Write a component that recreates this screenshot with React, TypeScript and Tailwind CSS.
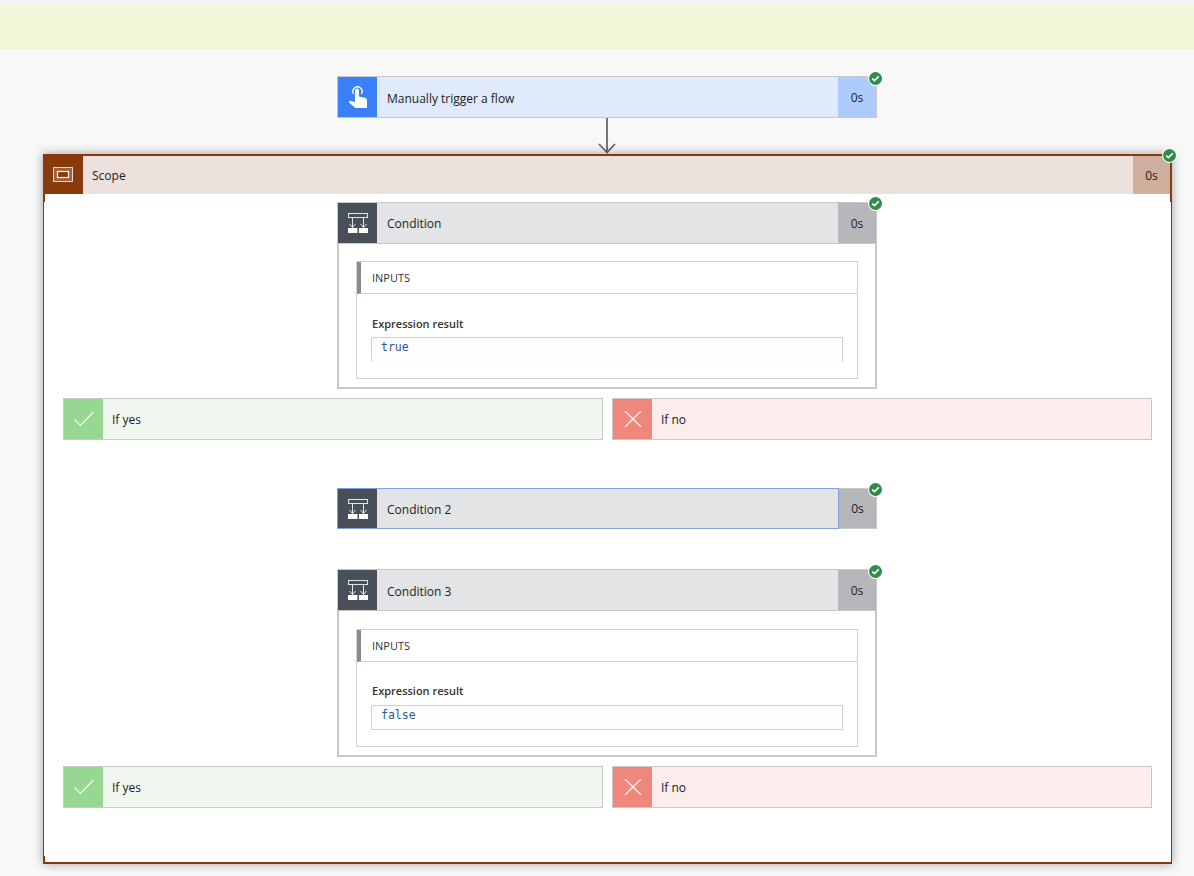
import React from 'react';

const CheckBadge: React.FC<{ pos?: string }> = ({ pos = '-top-[6px] -right-[7px]' }) => (
  <div className={`absolute ${pos} h-[15px] w-[15px] rounded-full bg-white flex items-center justify-center z-10`}>
    <div className="h-[13px] w-[13px] rounded-full bg-[#2f8c49] flex items-center justify-center">
      <svg width="9" height="9" viewBox="0 0 9 9" fill="none">
        <path d="M1.2 4.6 L3.4 6.6 L7.8 2.4" stroke="white" strokeWidth="1.6" />
      </svg>
    </div>
  </div>
);

const HandIcon: React.FC = () => (
  <svg width="22" height="26" viewBox="0 0 22 26" fill="none">
    <path d="M6.6 10 A4.6 4.6 0 1 1 14.4 10" stroke="white" strokeWidth="1.3" />
    <path
      d="M8 6.5 a2 2 0 0 1 4 0 V12.5 l6 1.3 q2 .5 2 2.5 V24 H8.5 L2.2 18.8 q-1 -1.6 1 -2 L8 18 Z"
      fill="white"
    />
  </svg>
);

const ConditionIcon: React.FC = () => (
  <svg width="20" height="20" viewBox="0 0 20 20" fill="none">
    <rect x="0.5" y="0.5" width="19" height="4" stroke="white" strokeOpacity="0.85" />
    <path d="M4.5 5 V14 M15.5 5 V14" stroke="white" strokeOpacity="0.85" />
    <path d="M1.5 11 L4.5 14.5 L7.5 11 M12.5 11 L15.5 14.5 L18.5 11" stroke="white" strokeOpacity="0.85" />
    <rect x="0" y="15" width="9.5" height="5" fill="white" />
    <rect x="11" y="15" width="9" height="5" fill="white" />
  </svg>
);

const ScopeIcon: React.FC = () => (
  <svg width="20" height="15" viewBox="0 0 20 15" fill="none">
    <rect x="0.5" y="0.5" width="19" height="14" stroke="#ead9cd" fill="rgba(255,255,255,0.2)" />
    <rect x="4.5" y="4.5" width="11" height="6" stroke="white" strokeWidth="1.2" fill="#883a0c" />
  </svg>
);

type HeaderProps = {
  title: string;
  icon: React.ReactNode;
  iconClass: string;
  barClass: string;
  timeClass: string;
  titlePad?: string;
  badgePos?: string;
};

const CardHeader: React.FC<HeaderProps> = ({
  title,
  icon,
  iconClass,
  barClass,
  timeClass,
  titlePad = 'pt-[2px]',
  badgePos,
}) => (
  <div className="relative flex h-full text-[12px] text-[#222]">
    <div className={`flex flex-1 min-w-0 ${barClass}`}>
      <div className={`flex w-[39px] shrink-0 items-center justify-center ${iconClass}`}>{icon}</div>
      <span className={`flex items-center pl-[10px] ${titlePad}`}>{title}</span>
    </div>
    <div className={`flex w-[38px] shrink-0 items-center justify-center pt-[1px] ${timeClass}`}>0s</div>
    <CheckBadge pos={badgePos} />
  </div>
);

type InputsProps = {
  value: string;
  openBottom?: boolean;
  top: string;
  labelPad: string;
  valueGap: string;
};

const Inputs: React.FC<InputsProps> = ({ value, openBottom, top, labelPad, valueGap }) => (
  <div className={`mx-[17px] ${top} border border-[#d0d0d0] text-[#333]`}>
    <div className="flex h-[32px] items-center border-b border-[#d0d0d0] border-l-[4px] border-l-[#868b90] pl-[11px] pt-[1px] text-[11px]">
      INPUTS
    </div>
    <div className={`pl-[14px] pr-[14px] ${labelPad} pb-[16px]`}>
      <div className="text-[11px] font-semibold leading-[15px] pl-px">Expression result</div>
      <div
        className={`${valueGap} h-[25px] border-x border-t border-[#d0d0d0] bg-[#fdfdfd] pl-[9px] pt-[2px] font-['DejaVu_Sans_Mono',monospace] text-[11.5px] leading-[14px] text-[#2b579a] ${
          openBottom ? '' : 'border-b'
        }`}
      >
        {value}
      </div>
    </div>
  </div>
);

type ConditionCardProps = InputsProps & {
  title: string;
  titlePad?: string;
  badgePos?: string;
};

const ConditionCard: React.FC<ConditionCardProps> = ({ title, titlePad, badgePos, ...inputs }) => (
  <div className="ml-[293px] w-[540px] border-2 border-t border-[#c8c8c8] bg-white">
    <div className="h-[41px] border-b border-[#c8c8c8] -mx-[1px]">
      <CardHeader
        title={title}
        icon={<ConditionIcon />}
        iconClass="bg-[#474f59]"
        barClass="bg-[#e3e4e5]"
        timeClass="bg-[#b5b7ba]"
        titlePad={titlePad}
        badgePos={badgePos}
      />
    </div>
    <Inputs {...inputs} />
    <div className="h-[8px]" />
  </div>
);

const Branch: React.FC<{ label: string; yes?: boolean }> = ({ label, yes }) => (
  <div className={`flex h-[42px] w-[540px] border border-[#c8c8c8] text-[12px] text-[#222] ${yes ? 'bg-[#eff7ef]' : 'bg-[#fdecec]'}`}>
    <div className={`flex w-[39px] items-center justify-center ${yes ? 'bg-[#97d78f]' : 'bg-[#f0877f]'}`}>
      <svg width="20" height="16" viewBox="0 0 20 16" fill="none">
        {yes ? (
          <path d="M0.5 8.5 L6.5 14.5 L19.5 1" stroke="white" strokeWidth="1.1" />
        ) : (
          <path d="M2 0 L18 16 M18 0 L2 16" stroke="white" strokeWidth="1.1" />
        )}
      </svg>
    </div>
    <span className="flex items-center pl-[9px] pt-[2px]">{label}</span>
  </div>
);

const Branches: React.FC = () => (
  <div className="ml-[19px] mt-[9px] flex gap-[9px]">
    <Branch label="If yes" yes />
    <Branch label="If no" />
  </div>
);

const App: React.FC = () => {
  return (
    <div className="h-[876px] overflow-hidden bg-[#f8f8f8] font-['Open_Sans',sans-serif]">
      <div className="h-[6px] bg-[#f4f4f4]" />
      <div className="h-[43px] bg-[#f2f7d9]" />

      <div className="ml-[337px] mt-[27px] h-[42px] w-[540px] border border-[#c8c8c8]">
        <CardHeader
          title="Manually trigger a flow"
          icon={<HandIcon />}
          iconClass="bg-[#3a81f9]"
          barClass="bg-[#e0eafd]"
          timeClass="bg-[#adcbfb]"
          titlePad="pt-[4px]"
        />
      </div>

      <div className="ml-[598px] flex h-[36px] w-[18px] justify-center">
        <svg width="18" height="36" viewBox="0 0 18 36" fill="none">
          <path d="M9 0 V35 M1 26 L9 34.5 L17 26" stroke="#666" strokeWidth="1.8" />
        </svg>
      </div>

      <div className="relative ml-[43px] h-[710px] w-[1129px] border-x border-y-2 border-[#883a0c] bg-white shadow-[0_0_10px_rgba(0,0,0,0.35)]">
        <div className="relative flex h-[38px] -ml-px mr-px text-[12px] text-[#222]">
          <div className="flex flex-1 bg-[#ece1dc]">
            <div className="-mt-[2px] flex w-[40px] shrink-0 items-center justify-center bg-[#883a0c]">
              <ScopeIcon />
            </div>
            <span className="flex items-center pl-[9px] pt-[2px]">Scope</span>
          </div>
          <div className="flex w-[37px] shrink-0 items-center justify-center bg-[#ceae9d] pt-[1px]">0s</div>
          <CheckBadge pos="-top-[8px] -right-[7px]" />
        </div>

        <div className="absolute left-0 top-[38px] h-[8px] w-px bg-[#883a0c]" />
        <div className="absolute right-0 top-0 h-[46px] w-px bg-[#883a0c]" />
        <div className="absolute left-0 bottom-0 h-[6px] w-px bg-[#883a0c]" />

        <div className="pt-[8px]">
          <ConditionCard
            title="Condition"
            value="true"
            openBottom
            top="mt-[17px]"
            labelPad="pt-[22px]"
            valueGap="mt-[6px]"
            badgePos="-top-[7px] -right-[7px]"
          />
          <Branches />

          <div className="ml-[293px] mt-[48px] h-[41px] w-[540px]">
            <CardHeader
              title="Condition 2"
              icon={<ConditionIcon />}
              iconClass="bg-[#474f59]"
              barClass="bg-[#e3e4e5] border border-[#7f9fe0]"
              timeClass="bg-[#b5b7ba] border-y border-r border-[#c8c8c8]"
              badgePos="-top-[6px] -right-[6px]"
            />
          </div>

          <div className="mt-[40px]">
            <ConditionCard
              title="Condition 3"
              value="false"
              top="mt-[18px]"
              labelPad="pt-[21px]"
              valueGap="mt-[7px]"
              titlePad="pt-[4px]"
            />
          </div>
          <Branches />
        </div>
      </div>
    </div>
  );
};

export default App;
